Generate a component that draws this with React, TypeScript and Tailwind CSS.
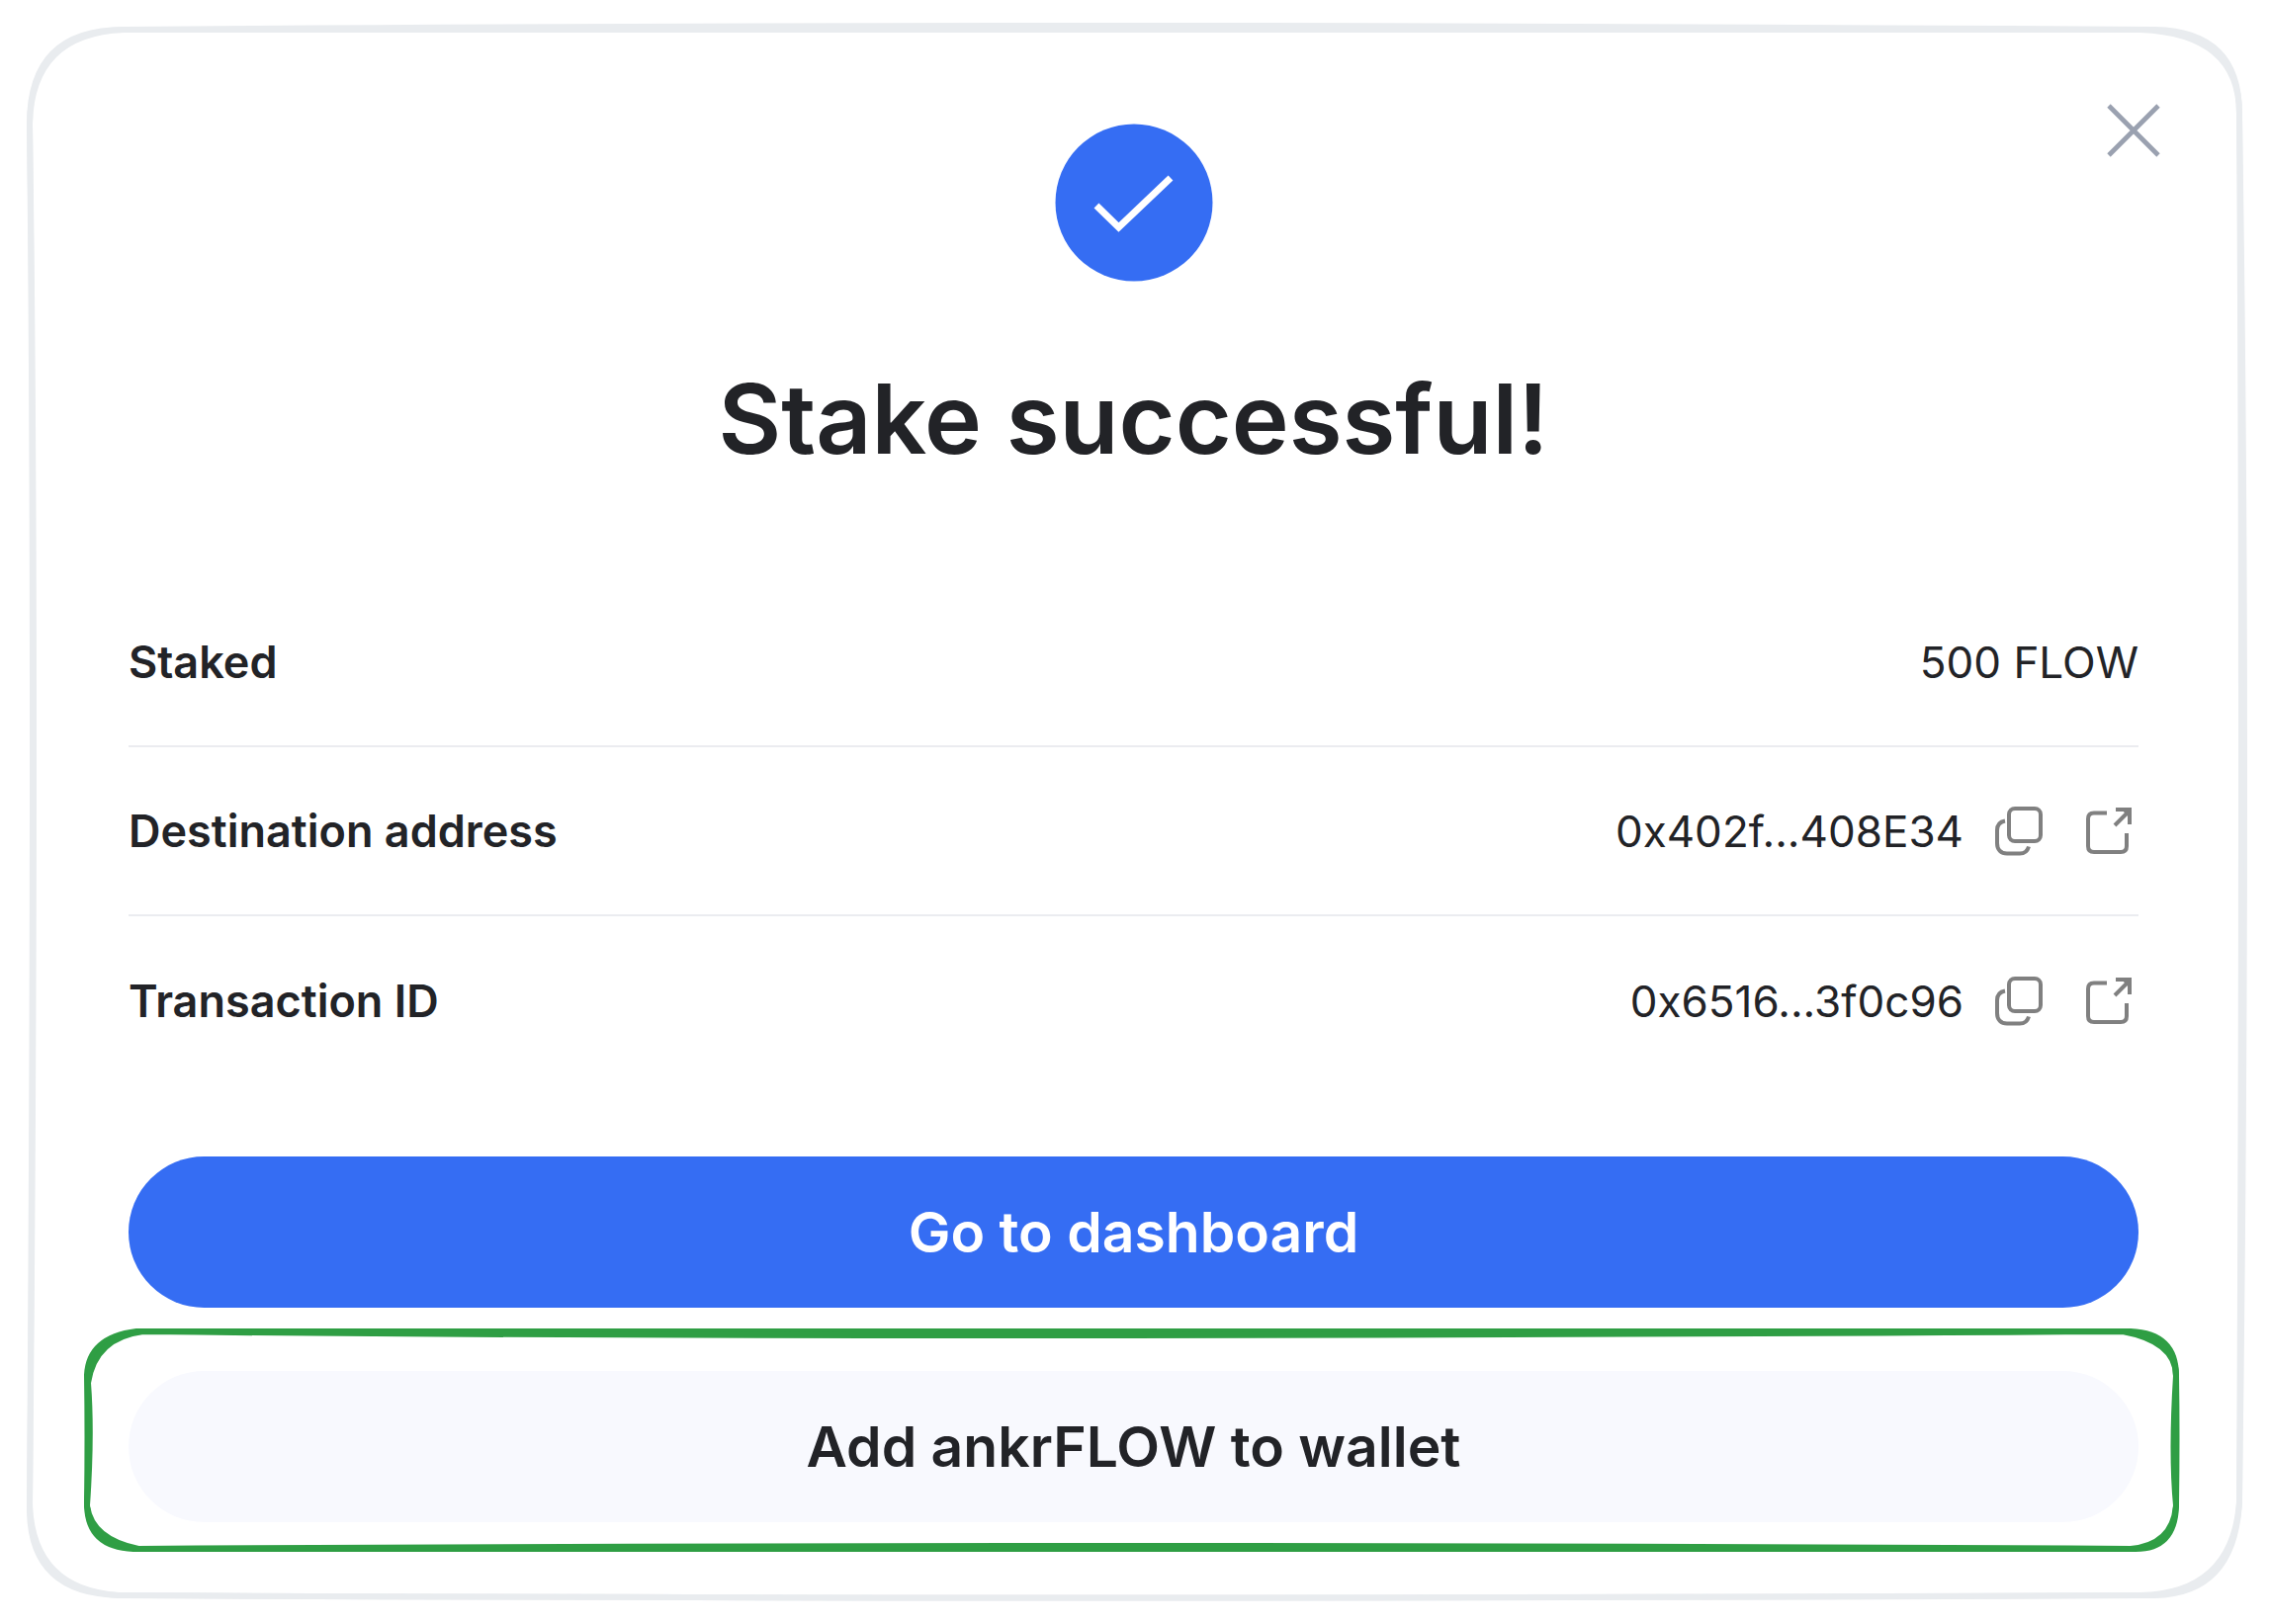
import type { ReactNode } from "react";

type DetailRow = {
  label: string;
  value: string;
  hasActions: boolean;
};

const details: DetailRow[] = [
  { label: "Staked", value: "500 FLOW", hasActions: false },
  { label: "Destination address", value: "0x402f...408E34", hasActions: true },
  { label: "Transaction ID", value: "0x6516...3f0c96", hasActions: true },
];

function CheckIcon() {
  return (
    <svg className="w-40 h-40" viewBox="0 0 160 160" fill="none" aria-hidden="true">
      <circle cx="80" cy="80" r="79.5" fill="#356df3" />
      <path d="M42 83 L64.5 105 L117 55" stroke="#fff" strokeWidth="7" />
    </svg>
  );
}

function CloseIcon() {
  return (
    <svg className="w-[54px] h-[54px]" viewBox="0 0 54 54" fill="none" stroke="#9aa1b0" strokeWidth="4.8" aria-hidden="true">
      <path d="M2 2 L52 52 M52 2 L2 52" />
    </svg>
  );
}

function CopyIcon() {
  return (
    <svg className="w-12 h-[50px]" viewBox="0 0 48 50" fill="none" stroke="#808080" strokeWidth="4" aria-hidden="true">
      <rect x="14" y="2" width="32" height="33" rx="6" />
      <path d="M10 14.5 C4.5 15.5 2 18.5 2 24 V37 C2 44 6 47.5 12 47.5 H25 C30 47.5 33 44 34 40.5" />
    </svg>
  );
}

function OpenIcon() {
  return (
    <svg className="w-12 h-[50px]" viewBox="0 0 48 50" fill="none" stroke="#808080" strokeWidth="4" aria-hidden="true">
      <path d="M21 6.5 H8 C4 6.5 2 8.5 2 12.5 V40 C2 44 4 46 8 46 H35 C39 46 41 44 41 40 V27" />
      <path d="M29 19 L43 5 M30 3 H44 V18" />
      <path d="M36 3 H45 V13 Z" fill="#808080" stroke="none" />
    </svg>
  );
}

function IconButton({ label, children }: { label: string; children: ReactNode }) {
  return (
    <button type="button" aria-label={label} className="cursor-pointer">
      {children}
    </button>
  );
}

// Sketchy outline around the whole dialog
function DialogOutline() {
  return (
    <svg
      className="absolute inset-0 w-full h-full pointer-events-none"
      viewBox="0 0 2295 1643"
      preserveAspectRatio="none"
      fill="none"
      stroke="#e9ecef"
      strokeWidth="6"
      aria-hidden="true"
    >
      <path d="M125 30 Q1050 22 2180 30 Q2265 32 2265 115 Q2275 760 2265 1520 Q2260 1612 2180 1614 Q1100 1619 120 1614 Q32 1612 30 1530 Q38 680 30 125 Q30 30 125 30 Z" />
      <path d="M125 30 Q1050 31 2165 30 Q2265 34 2265 115 Q2269 760 2265 1520 Q2258 1612 2165 1614 Q1100 1619 120 1614 Q32 1608 30 1520 Q36 680 30 125 Q32 34 125 30 Z" />
    </svg>
  );
}

// Green marker line drawn over the wallet button
function MarkerOutline() {
  return (
    <svg
      className="absolute -inset-x-11 -top-11 w-[calc(100%+88px)] h-[228px] pointer-events-none"
      viewBox="86 1342 2121 228"
      preserveAspectRatio="none"
      fill="none"
      stroke="#2f9e44"
      strokeWidth="6"
      overflow="visible"
      aria-hidden="true"
    >
      <path d="M138 1346 Q950 1342 2155 1346 Q2201 1348 2201 1391 Q2202 1450 2201 1522 Q2200 1566 2160 1566 Q1100 1566 135 1566 Q88 1564 88 1520 Q89 1450 88 1390 Q90 1352 138 1346 Z" />
      <path d="M145 1346 Q850 1354 2147 1346 Q2201 1356 2201 1391 Q2196 1470 2201 1522 Q2198 1562 2155 1566 Q1100 1560 140 1566 Q92 1556 88 1522 Q93 1450 89 1398 Q96 1352 145 1346 Z" />
    </svg>
  );
}

export default function App() {
  return (
    <main className="relative min-h-screen bg-white pl-[130px] pr-[132px] pt-[105px] pb-[103px] font-['Inter',sans-serif] text-[#222327]">
      <DialogOutline />

      <div className="flex justify-end -mr-[22px] h-5">
        <IconButton label="Close">
          <CloseIcon />
        </IconButton>
      </div>

      <header className="flex flex-col items-center">
        <CheckIcon />
        <h1 className="mt-[79px] text-[98px] leading-[120px] font-semibold">Stake successful!</h1>
      </header>

      <dl className="mt-[101px]">
        {details.map((row) => (
          <div
            key={row.label}
            className="flex items-center justify-between h-[171px] border-b-2 border-[#ebecf0] last:border-b-0 leading-[56px]"
          >
            <dt className="text-[45px] font-semibold">{row.label}</dt>
            <dd className="flex items-center text-[44px]">
              <span>{row.value}</span>
              {row.hasActions && (
                <span className="flex items-center gap-11 ml-8 mr-[5px]">
                  <IconButton label={"Copy " + row.label}>
                    <CopyIcon />
                  </IconButton>
                  <a href="#" aria-label={"Open " + row.label}>
                    <OpenIcon />
                  </a>
                </span>
              )}
            </dd>
          </div>
        ))}
      </dl>

      <div className="mt-[72px] flex flex-col gap-16 text-[57px] leading-[72px] font-semibold">
        <button type="button" className="h-[153px] rounded-full bg-[#356df3] text-white cursor-pointer">
          Go to dashboard
        </button>
        <div className="relative">
          <button type="button" className="w-full h-[153px] rounded-full bg-[#f8f9fe] cursor-pointer">
            Add ankrFLOW to wallet
          </button>
          <MarkerOutline />
        </div>
      </div>
    </main>
  );
}
